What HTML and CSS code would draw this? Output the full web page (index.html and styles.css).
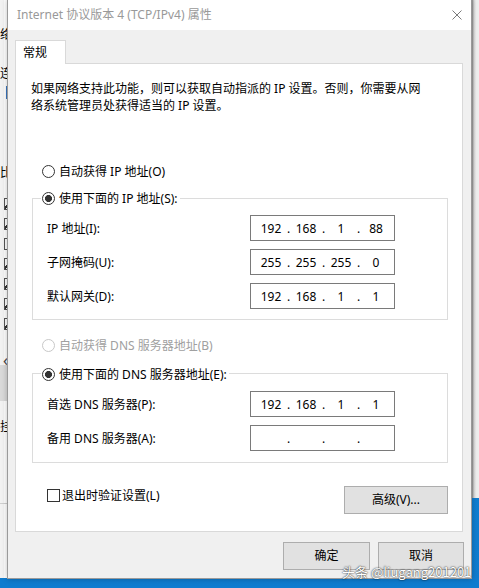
FILE: index.html
```html
<!DOCTYPE html>
<html lang="zh-CN">
<head>
    <meta charset="UTF-8">
    <meta name="viewport" content="width=device-width, initial-scale=1.0">
    <title>Internet 协议版本 4 (TCP/IPv4) 属性</title>
    <link rel="stylesheet" href="styles.css">
</head>
<body>
    <div class="desktop">
        <!-- Windows behind the dialog -->
        <div class="bg-window bg-left">
            <div class="bg-strip"></div>
            <span class="frag frag-1">络</span>
            <span class="frag frag-2">连接</span>
            <span class="frag-icon"></span>
            <span class="frag frag-3">比</span>
            <div class="frag-checks">
                <span class="frag-box on"></span>
                <span class="frag-box on"></span>
                <span class="frag-box"></span>
                <span class="frag-box on"></span>
                <span class="frag-box on"></span>
                <span class="frag-box on"></span>
                <span class="frag-box on"></span>
            </div>
            <span class="frag-arrow">&lsaquo;</span>
            <div class="frag-bar"></div>
            <span class="frag frag-4">挂</span>
            <div class="frag-line"></div>
        </div>
        <div class="bg-window bg-right"></div>

        <!-- Dialog -->
        <div class="dialog">
            <div class="titlebar">
                <span class="title">Internet 协议版本 4 (TCP/IPv4) 属性</span>
                <svg class="close" width="10" height="10" viewBox="0 0 10 10">
                    <path d="M0.5 0.5 L9.5 9.5 M9.5 0.5 L0.5 9.5" stroke="#7a7a7a" stroke-width="1" fill="none"/>
                </svg>
            </div>

            <div class="dialog-body">
                <div class="tabs">
                    <div class="tab">常规</div>
                </div>

                <div class="panel">
                    <p class="desc">如果网络支持此功能，则可以获取自动指派的 IP 设置。否则，你需要从网<br>络系统管理员处获得适当的 IP 设置。</p>

                    <label class="radio radio-top">
                        <span class="radio-mark"></span>自动获得 IP 地址(O)
                    </label>

                    <div class="group group-ip">
                        <label class="radio legend checked">
                            <span class="radio-mark"></span>使用下面的 IP 地址(S):
                        </label>
                        <div class="field-row">
                            <span class="field-label">IP 地址(I):</span>
                            <div class="ip-field">
                                <span class="seg">192</span><span class="dot">.</span><span class="seg">168</span><span class="dot">.</span><span class="seg">1</span><span class="dot">.</span><span class="seg">88</span>
                            </div>
                        </div>
                        <div class="field-row">
                            <span class="field-label">子网掩码(U):</span>
                            <div class="ip-field">
                                <span class="seg">255</span><span class="dot">.</span><span class="seg">255</span><span class="dot">.</span><span class="seg">255</span><span class="dot">.</span><span class="seg">0</span>
                            </div>
                        </div>
                        <div class="field-row">
                            <span class="field-label">默认网关(D):</span>
                            <div class="ip-field">
                                <span class="seg">192</span><span class="dot">.</span><span class="seg">168</span><span class="dot">.</span><span class="seg">1</span><span class="dot">.</span><span class="seg">1</span>
                            </div>
                        </div>
                    </div>

                    <label class="radio radio-dns disabled">
                        <span class="radio-mark"></span>自动获得 DNS 服务器地址(B)
                    </label>

                    <div class="group group-dns">
                        <label class="radio legend checked">
                            <span class="radio-mark"></span>使用下面的 DNS 服务器地址(E):
                        </label>
                        <div class="field-row">
                            <span class="field-label">首选 DNS 服务器(P):</span>
                            <div class="ip-field">
                                <span class="seg">192</span><span class="dot">.</span><span class="seg">168</span><span class="dot">.</span><span class="seg">1</span><span class="dot">.</span><span class="seg">1</span>
                            </div>
                        </div>
                        <div class="field-row">
                            <span class="field-label">备用 DNS 服务器(A):</span>
                            <div class="ip-field">
                                <span class="seg"></span><span class="dot">.</span><span class="seg"></span><span class="dot">.</span><span class="seg"></span><span class="dot">.</span><span class="seg"></span>
                            </div>
                        </div>
                    </div>

                    <div class="panel-footer">
                        <label class="checkbox">
                            <span class="check-mark"></span>退出时验证设置(L)
                        </label>
                        <button class="btn btn-advanced">高级(V)...</button>
                    </div>
                </div>

                <div class="dialog-buttons">
                    <button class="btn btn-ok">确定</button>
                    <button class="btn btn-cancel">取消</button>
                </div>
            </div>
        </div>

        <div class="watermark">头条 @liugang201201</div>
    </div>
</body>
</html>
```

FILE: styles.css
```css
/* General */
body {
    margin: 0;
    background-color: #1583d6;
    font-family: "Noto Sans", "Noto Sans CJK SC", sans-serif;
    font-size: 12px;
    color: #000;
}

.desktop {
    position: relative;
    width: 479px;
    height: 588px;
    overflow: hidden;
    background: linear-gradient(#1a88da, #0f7ccf);
}

/* Background windows */
.bg-window {
    position: absolute;
    top: 0;
}

.bg-left {
    left: -40px;
    width: 80px;
    height: 578px;
    background-color: #fff;
    overflow: hidden;
}

.bg-strip {
    position: absolute;
    left: 40px;
    top: 0;
    width: 4px;
    height: 578px;
    background-color: #f3f3f3;
}

.frag {
    position: absolute;
    left: 40px;
    font-family: "Noto Sans CJK SC", sans-serif;
    font-size: 12px;
    line-height: 14px;
    color: #000;
}

.frag-1 { top: 27px; }
.frag-2 { top: 66px; }
.frag-3 { top: 165px; }
.frag-4 { top: 419px; }

.frag-icon {
    position: absolute;
    left: 46px;
    top: 86px;
    width: 2px;
    height: 13px;
    background-color: #3b78c2;
}

.frag-checks {
    position: absolute;
    left: 44px;
    top: 198px;
    display: flex;
    flex-direction: column;
    gap: 8px;
}

.frag-box {
    width: 10px;
    height: 12px;
    border: 1px solid #555;
    box-sizing: border-box;
    background: #fff;
}

.frag-box.on {
    background: linear-gradient(135deg, #fff 40%, #333 40%, #333 60%, #fff 60%);
}

.frag-arrow {
    position: absolute;
    left: 43px;
    top: 352px;
    font-size: 16px;
    line-height: 16px;
    color: #444;
}

.frag-bar {
    position: absolute;
    left: 40px;
    top: 365px;
    width: 40px;
    height: 36px;
    background-color: #dadada;
}

.frag-line {
    position: absolute;
    left: 40px;
    top: 503px;
    width: 40px;
    height: 1px;
    background-color: #d0d0d0;
}

.bg-right {
    left: 472px;
    width: 40px;
    height: 498px;
    background: linear-gradient(90deg, #8a8a8a, #d8d8d8 2px, #efefef 4px);
}

/* Dialog window */
.dialog {
    position: absolute;
    left: 7px;
    top: -1px;
    width: 465px;
    height: 580px;
    box-sizing: border-box;
    border: 1px solid #9a9a9a;
    background-color: #f0f0f0;
    box-shadow: 0 0 6px rgba(0, 0, 0, 0.25);
}

.titlebar {
    height: 30px;
    background-color: #fff;
    display: flex;
    align-items: center;
    justify-content: space-between;
    padding: 0 9px 0 9px;
}

.title {
    color: #999;
    font-size: 12px;
    line-height: 16px;
}

.close {
    display: block;
}

.dialog-body {
    padding: 10px 8px 0 7px;
}

/* Tabs */
.tabs {
    display: flex;
}

.tab {
    position: relative;
    z-index: 1;
    width: 51px;
    height: 24px;
    box-sizing: border-box;
    border: 1px solid #d9d9d9;
    border-bottom: none;
    background-color: #fff;
    margin-bottom: -1px;
    padding-left: 7px;
    line-height: 23px;
}

.panel {
    width: 448px;
    box-sizing: border-box;
    border: 1px solid #d9d9d9;
    background-color: #fff;
    padding: 16px 15px 17px 15px;
}

.desc {
    margin: 0;
    line-height: 17px;
}

/* Radios */
.radio {
    display: flex;
    align-items: center;
    gap: 4px;
    height: 20px;
    padding-left: 11px;
}

.radio-mark {
    width: 13px;
    height: 13px;
    box-sizing: border-box;
    border: 1px solid #333;
    border-radius: 50%;
    background-color: #fff;
}

.radio.checked .radio-mark {
    background: radial-gradient(circle, #333 0 3.2px, #fff 3.8px);
}

.radio.disabled {
    color: #a0a0a0;
}

.radio.disabled .radio-mark {
    border-color: #c8c8c8;
}

.radio-top {
    margin-top: 47px;
}

.radio-dns {
    margin-top: 15px;
}

/* Group boxes */
.group {
    width: 416px;
    margin-left: 1px;
    box-sizing: border-box;
    border: 1px solid #dcdcdc;
    padding-bottom: 10px;
}

.group-ip {
    margin-top: 17px;
}

.group-dns {
    margin-top: 18px;
    padding-bottom: 11px;
}

.legend {
    width: fit-content;
    margin-left: 8px;
    padding-left: 1px;
    padding-right: 2px;
    background-color: #fff;
}

.group-ip .legend {
    margin-top: -11px;
}

.group-dns .legend {
    margin-top: -10px;
}

.field-row {
    display: flex;
    align-items: center;
    height: 26px;
    margin-top: 8px;
    padding-left: 14px;
}

.legend + .field-row {
    margin-top: 7px;
}

.field-label {
    width: 203px;
}

.ip-field {
    width: 145px;
    height: 26px;
    box-sizing: border-box;
    border: 1px solid #7a7a7a;
    padding-left: 5px;
    display: flex;
    align-items: center;
}

.seg {
    width: 30px;
    text-align: center;
}

.dot {
    width: 5px;
    text-align: center;
}

/* Footer of the panel */
.panel-footer {
    width: 416px;
    margin-left: 1px;
    margin-top: 23px;
    display: flex;
    justify-content: space-between;
    align-items: flex-start;
}

.checkbox {
    display: flex;
    align-items: center;
    gap: 2px;
    padding-left: 15px;
    height: 20px;
    margin-top: -1px;
}

.check-mark {
    width: 13px;
    height: 13px;
    box-sizing: border-box;
    border: 1px solid #333;
    background-color: #fff;
}

/* Buttons */
.btn {
    height: 28px;
    box-sizing: border-box;
    border: 1px solid #adadad;
    background-color: #e1e1e1;
    font-family: inherit;
    font-size: 12px;
    line-height: 14px;
    color: #000;
    padding: 0;
}

.btn-advanced {
    width: 104px;
}

.dialog-buttons {
    display: flex;
    justify-content: flex-end;
    gap: 8px;
    margin-top: 10px;
    margin-right: -1px;
}

.btn-ok {
    width: 87px;
}

.btn-cancel {
    width: 86px;
}

/* Watermark */
.watermark {
    position: absolute;
    left: 342px;
    top: 565px;
    font-family: "Noto Sans CJK SC", sans-serif;
    font-size: 13px;
    line-height: 14px;
    color: #fff;
    text-shadow: 0 0 2px rgba(0, 0, 0, 0.8), 0 0 1px rgba(0, 0, 0, 0.6);
}
```
